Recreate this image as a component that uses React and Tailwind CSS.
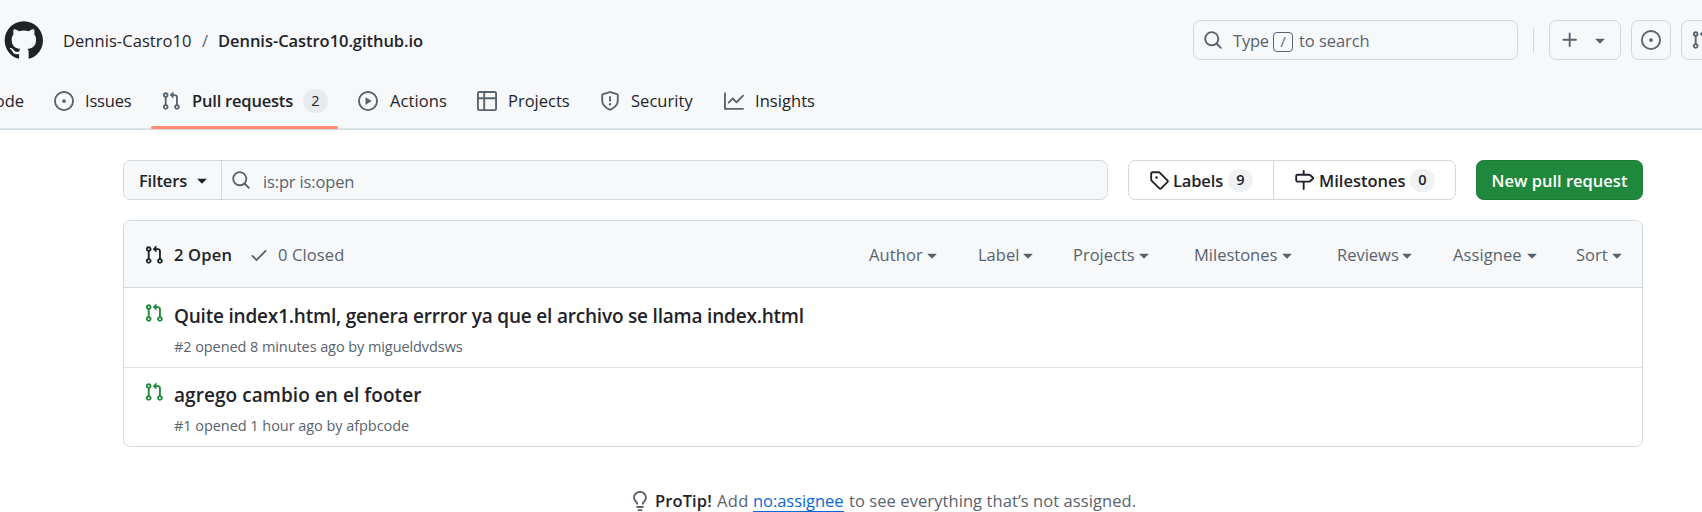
const icons = {
  pr: "M1.5 3.25a2.25 2.25 0 1 1 3 2.122v5.256a2.251 2.251 0 1 1-1.5 0V5.372A2.25 2.25 0 0 1 1.5 3.25Zm5.677-.177L9.573.677A.25.25 0 0 1 10 .854V2.5h1A2.5 2.5 0 0 1 13.5 5v5.628a2.251 2.251 0 1 1-1.5 0V5a1 1 0 0 0-1-1h-1v1.646a.25.25 0 0 1-.427.177L7.177 3.427a.25.25 0 0 1 0-.354ZM3.75 2.5a.75.75 0 1 0 0 1.5.75.75 0 0 0 0-1.5Zm0 9.5a.75.75 0 1 0 0 1.5.75.75 0 0 0 0-1.5Zm8.25.75a.75.75 0 1 0 1.5 0 .75.75 0 0 0-1.5 0Z",
  issue: "M8 9.5a1.5 1.5 0 1 0 0-3 1.5 1.5 0 0 0 0 3Z M8 0a8 8 0 1 1 0 16A8 8 0 0 1 8 0ZM1.5 8a6.5 6.5 0 1 0 13 0 6.5 6.5 0 0 0-13 0Z",
  play: "M8 0a8 8 0 1 1 0 16A8 8 0 0 1 8 0ZM1.5 8a6.5 6.5 0 1 0 13 0 6.5 6.5 0 0 0-13 0Zm4.879-2.773 4.264 2.559a.25.25 0 0 1 0 .428l-4.264 2.559A.25.25 0 0 1 6 10.559V5.442a.25.25 0 0 1 .379-.215Z",
  table: "M0 1.75C0 .784.784 0 1.75 0h12.5C15.216 0 16 .784 16 1.75v12.5A1.75 1.75 0 0 1 14.25 16H1.75A1.75 1.75 0 0 1 0 14.25ZM6.5 6.5v8h7.75a.25.25 0 0 0 .25-.25V6.5Zm8-1.5V1.75a.25.25 0 0 0-.25-.25H6.5V5Zm-13 1.5v7.75c0 .138.112.25.25.25H5v-8ZM5 5V1.5H1.75a.25.25 0 0 0-.25.25V5Z",
  shield: "M7.467.133a1.748 1.748 0 0 1 1.066 0l5.25 1.68A1.75 1.75 0 0 1 15 3.48V7c0 1.566-.32 3.182-1.303 4.682-.983 1.498-2.585 2.813-5.032 3.855a1.697 1.697 0 0 1-1.33 0c-2.447-1.042-4.049-2.357-5.032-3.855C1.32 10.182 1 8.566 1 7V3.48a1.75 1.75 0 0 1 1.217-1.667Zm.61 1.429a.25.25 0 0 0-.153 0l-5.25 1.68a.25.25 0 0 0-.174.238V7c0 1.358.275 2.666 1.057 3.86.784 1.194 2.121 2.34 4.366 3.297a.196.196 0 0 0 .154 0c2.245-.956 3.582-2.104 4.366-3.298C13.225 9.666 13.5 8.36 13.5 7V3.48a.251.251 0 0 0-.174-.237l-5.25-1.68ZM8.75 4.75v3a.75.75 0 0 1-1.5 0v-3a.75.75 0 0 1 1.5 0ZM9 10.5a1 1 0 1 1-2 0 1 1 0 0 1 2 0Z",
  graph: "M1.5 1.75V13.5h13.75a.75.75 0 0 1 0 1.5H.75a.75.75 0 0 1-.75-.75V1.75a.75.75 0 0 1 1.5 0Zm14.28 2.53-5.25 5.25a.75.75 0 0 1-1.06 0L7 7.06 4.28 9.78a.751.751 0 0 1-1.042-.018.751.751 0 0 1-.018-1.042l3.25-3.25a.75.75 0 0 1 1.06 0L10 7.94l4.72-4.72a.751.751 0 0 1 1.042.018.751.751 0 0 1 .018 1.042Z",
  search: "M10.68 11.74a6 6 0 0 1-7.922-8.982 6 6 0 0 1 8.982 7.922l3.04 3.04a.749.749 0 0 1-.326 1.275.749.749 0 0 1-.734-.215ZM11.5 7a4.499 4.499 0 1 0-8.997 0A4.499 4.499 0 0 0 11.5 7Z",
  plus: "M7.75 2a.75.75 0 0 1 .75.75V7h4.25a.75.75 0 0 1 0 1.5H8.5v4.25a.75.75 0 0 1-1.5 0V8.5H2.75a.75.75 0 0 1 0-1.5H7V2.75A.75.75 0 0 1 7.75 2Z",
  triangle: "m4.427 7.427 3.396 3.396a.25.25 0 0 0 .354 0l3.396-3.396A.25.25 0 0 0 11.396 7H4.604a.25.25 0 0 0-.177.427Z",
  tag: "M1 7.775V2.75C1 1.784 1.784 1 2.75 1h5.025c.464 0 .91.184 1.238.513l6.25 6.25a1.75 1.75 0 0 1 0 2.474l-5.026 5.026a1.75 1.75 0 0 1-2.474 0l-6.25-6.25A1.752 1.752 0 0 1 1 7.775Zm1.5 0c0 .066.026.13.073.177l6.25 6.25a.25.25 0 0 0 .354 0l5.025-5.025a.25.25 0 0 0 0-.354l-6.25-6.25a.25.25 0 0 0-.177-.073H2.75a.25.25 0 0 0-.25.25ZM6 5a1 1 0 1 1 0 2 1 1 0 0 1 0-2Z",
  milestone: "M7.75 0a.75.75 0 0 1 .75.75V3h3.634c.414 0 .814.147 1.13.414l2.07 1.75a1.75 1.75 0 0 1 0 2.672l-2.07 1.75a1.75 1.75 0 0 1-1.13.414H8.5v5.25a.75.75 0 0 1-1.5 0V10H2.75A1.75 1.75 0 0 1 1 8.25v-3.5C1 3.784 1.784 3 2.75 3H7V.75A.75.75 0 0 1 7.75 0Zm4.384 8.5a.25.25 0 0 0 .161-.06l2.07-1.75a.248.248 0 0 0 0-.38l-2.07-1.75a.25.25 0 0 0-.161-.06H2.75a.25.25 0 0 0-.25.25v3.5c0 .138.112.25.25.25h9.384Z",
  check: "M13.78 4.22a.75.75 0 0 1 0 1.06l-7.25 7.25a.75.75 0 0 1-1.06 0L2.22 9.28a.751.751 0 0 1 .018-1.042.751.751 0 0 1 1.042-.018L6 10.94l6.72-6.72a.75.75 0 0 1 1.06 0Z",
  bulb: "M8 1.5c-2.363 0-4 1.69-4 3.75 0 .984.424 1.625.984 2.304l.214.253c.223.264.47.556.673.848.284.411.537.896.621 1.49a.75.75 0 0 1-1.484.211c-.04-.282-.163-.547-.37-.847a8.456 8.456 0 0 0-.542-.68c-.084-.1-.173-.205-.268-.32C3.201 7.75 2.5 6.766 2.5 5.25 2.5 2.31 4.863 0 8 0s5.5 2.31 5.5 5.25c0 1.516-.701 2.5-1.328 3.259-.095.115-.184.22-.268.319-.207.245-.383.453-.541.681-.208.3-.33.565-.37.847a.751.751 0 0 1-1.485-.212c.084-.593.337-1.078.621-1.489.203-.292.45-.584.673-.848.075-.088.147-.173.213-.253.561-.679.985-1.32.985-2.304 0-2.06-1.637-3.75-4-3.75ZM5.75 12h4.5a.75.75 0 0 1 0 1.5h-4.5a.75.75 0 0 1 0-1.5ZM6 15.25a.75.75 0 0 1 .75-.75h2.5a.75.75 0 0 1 0 1.5h-2.5a.75.75 0 0 1-.75-.75Z",
};

const markPath =
  "M12.5.75C6.146.75 1 5.896 1 12.25c0 5.089 3.292 9.387 7.863 10.91.575.101.79-.244.79-.546 0-.273-.014-1.178-.014-2.142-2.889.532-3.636-.704-3.866-1.35-.13-.331-.69-1.352-1.18-1.625-.402-.216-.977-.748-.014-.762.906-.014 1.553.834 1.769 1.179 1.035 1.74 2.688 1.25 3.349.948.1-.747.402-1.25.733-1.538-2.559-.287-5.232-1.279-5.232-5.678 0-1.25.445-2.285 1.178-3.09-.115-.288-.517-1.467.115-3.048 0 0 .963-.302 3.163 1.179.92-.259 1.897-.388 2.875-.388.977 0 1.955.13 2.875.388 2.2-1.495 3.162-1.179 3.162-1.179.633 1.581.23 2.76.115 3.048.733.805 1.179 1.825 1.179 3.09 0 4.413-2.688 5.39-5.247 5.678.417.36.776 1.05.776 2.128 0 1.538-.014 2.774-.014 3.162 0 .302.216.662.79.547C20.709 21.637 24 17.324 24 12.25 24 5.896 18.854.75 12.5.75Z";

function Icon({ name, className = "" }) {
  return (
    <svg viewBox="0 0 16 16" fill="currentColor" aria-hidden="true" className={`size-5 shrink-0 ${className}`}>
      <path d={icons[name]} />
    </svg>
  );
}

function Text({ className = "", children }) {
  return <span className={`block shrink-0 whitespace-nowrap ${className}`}>{children}</span>;
}

function Header() {
  return (
    <div className="flex h-20 items-center pl-[3px]">
      <svg viewBox="0 0 24 24" fill="#1f2328" className="size-10 shrink-0">
        <path d={markPath} />
      </svg>
      <Text className="ml-5 w-[139px] pt-0.5 tracking-[0.06px]">Dennis-Castro10</Text>
      <Text className="w-4 pt-0.5 text-[#59636e]">/</Text>
      <Text className="pt-0.5 font-semibold tracking-[-0.05px]">Dennis-Castro10.github.io</Text>
      <div className="ml-auto flex w-[509px] shrink-0 items-center text-[#59636e]">
        <div className="flex h-10 w-[325px] shrink-0 items-center rounded-[7.5px] border border-[#d1d9e0] pl-[9px]">
          <Icon name="search" />
          <Text className="ml-[10px] w-[40px] pt-0.5 tracking-[-0.2px]">Type</Text>
          <kbd className="mt-1 flex h-5 w-5 shrink-0 items-center justify-center rounded-[4px] border border-[#59636e] font-['Open_Sans',sans-serif] text-[14px] leading-none">
            /
          </kbd>
          <Text className="ml-[6px] pt-0.5 tracking-[-0.06px]">to search</Text>
        </div>
        <div className="ml-[15px] h-[25px] w-px shrink-0 bg-[#d1d9e0]" />
        <div className="ml-[15px] flex h-10 w-[72px] shrink-0 items-center rounded-[7.5px] border border-[#d1d9e0] pl-[10px]">
          <Icon name="plus" />
          <Icon name="triangle" className="ml-[10px]" />
        </div>
        <div className="ml-[10px] flex size-10 shrink-0 items-center justify-center rounded-[7.5px] border border-[#d1d9e0]">
          <Icon name="issue" />
        </div>
        <div className="ml-[10px] flex h-10 w-[21px] shrink-0 items-center overflow-hidden rounded-l-[7.5px] border border-r-0 border-[#d1d9e0] pl-[9px]">
          <Icon name="pr" />
        </div>
      </div>
    </div>
  );
}

const tabs = [
  { icon: "issue", label: "Issues", box: "ml-[30px]", text: "ml-[11px] w-[46px] tracking-[-0.2px]" },
  { icon: "pr", label: "Pull requests", count: 2, active: true },
  { icon: "play", label: "Actions", box: "ml-5", text: "ml-3 w-[57px] tracking-[0.1px]" },
  { icon: "table", label: "Projects", box: "ml-[30px]", text: "ml-[11px] w-[62px]" },
  { icon: "shield", label: "Security", box: "ml-[30px]", text: "ml-[11px] w-[63px] tracking-[0.05px]" },
  { icon: "graph", label: "Insights", box: "ml-[30px]", text: "ml-[11px] w-[61px] tracking-[0.05px]" },
];

function Tabs() {
  return (
    <nav className="flex h-[49px] items-stretch">
      <div className="flex h-[42px] w-6 shrink-0 items-center justify-end overflow-hidden">
        <Text>Code</Text>
      </div>
      {tabs.map((t) =>
        t.active ? (
          <div
            key={t.label}
            className="ml-[20px] flex w-[187px] shrink-0 flex-col justify-between"
          >
            <div className="flex h-[42px] items-center pl-[10px]">
              <Icon name={t.icon} className="text-[#59636e]" />
              <Text className="ml-[11px] w-[111px] font-semibold tracking-[-0.2px]">{t.label}</Text>
              <Text className="flex h-6 w-[25px] items-center justify-center rounded-full bg-[#e8ebee] text-[14.5px]">
                {t.count}
              </Text>
            </div>
            <div className="h-[3px] rounded-sm bg-[#fd8c73]" />
          </div>
        ) : (
          <div key={t.label} className={`flex h-[42px] shrink-0 items-center ${t.box}`}>
            <Icon name={t.icon} className="text-[#59636e]" />
            <Text className={t.text}>{t.label}</Text>
          </div>
        )
      )}
    </nav>
  );
}

function Toolbar() {
  return (
    <div className="flex h-10 items-stretch">
      <div className="flex w-[985px] shrink-0 rounded-[7.5px] border border-[#d1d9e0] bg-[#f6f8fa]">
        <div className="flex w-[98px] shrink-0 items-center border-r border-[#d1d9e0] pl-[15px] font-semibold">
          <Text className="w-[53px] pt-px tracking-[-0.17px]">Filters</Text>
          <Icon name="triangle" />
        </div>
        <div className="flex items-center pl-[9px] text-[#59636e]">
          <Icon name="search" />
          <Text className="ml-[12px] pt-[3px] tracking-[-0.15px]">is:pr is:open</Text>
        </div>
      </div>
      <div className="ml-5 flex w-[328px] shrink-0 rounded-[7.5px] border border-[#d1d9e0] font-semibold">
        <div className="flex w-[145px] shrink-0 items-center border-r border-[#d1d9e0] pl-5">
          <Icon name="tag" />
          <Text className="ml-1 w-[55px] pt-px tracking-[-0.15px]">Labels</Text>
          <Text className="flex h-[23px] w-[25px] items-center justify-center rounded-full bg-[#eff1f3] text-[14.5px]">9</Text>
        </div>
        <div className="flex items-center pl-5">
          <Icon name="milestone" />
          <Text className="ml-[5px] w-[91px] pt-px">Milestones</Text>
          <Text className="flex h-[23px] w-[25px] items-center justify-center rounded-full bg-[#eff1f3] text-[14.5px]">0</Text>
        </div>
      </div>
      <div className="ml-5 flex w-[167px] shrink-0 items-center justify-center rounded-[7.5px] border border-[#1c7c37] bg-[#1f883d] font-semibold text-white">
        <Text className="pt-px">New pull request</Text>
      </div>
    </div>
  );
}

const filters = [
  { label: "Author", cls: "w-[109px]", text: "w-[53px] tracking-[0.12px]" },
  { label: "Label", cls: "w-[95px]", text: "w-[40px]" },
  { label: "Projects", cls: "w-[121px]", text: "w-[61px]" },
  { label: "Milestones", cls: "w-[143px]", text: "w-[83px]" },
  { label: "Reviews", cls: "w-[116px]", text: "w-[60px]" },
  { label: "Assignee", cls: "w-[123px]", text: "w-[69px] tracking-[0.1px]" },
  { label: "Sort", cls: "w-[66px]", text: "w-[31px]" },
];

const pulls = [
  {
    title: "Quite index1.html, genera errror ya que el archivo se llama index.html",
    titleCls: "tracking-[-0.2px]",
    meta: "#2 opened 8 minutes ago by migueldvdsws",
    metaCls: "tracking-[-0.08px]",
    row: "pt-[15px]",
  },
  {
    title: "agrego cambio en el footer",
    titleCls: "tracking-[0.06px]",
    meta: "#1 opened 1 hour ago by afpbcode",
    metaCls: "tracking-[-0.05px]",
    row: "border-t border-[#dde2e7] pt-[14px]",
  },
];

function PullList() {
  return (
    <div className="mt-5 overflow-hidden rounded-[7.5px] border border-[#d1d9e0]">
      <div className="flex h-[67px] items-center border-b border-[#d1d9e0] bg-[#f6f8fa] pl-5 text-[#59636e]">
        <Icon name="pr" className="mt-px text-[#1f2328]" />
        <Text className="ml-[10px] w-[75px] pt-px font-semibold tracking-[0.2px] text-[#1f2328]">2 Open</Text>
        <Icon name="check" className="mt-0.5" />
        <Text className="ml-[9px] pt-px tracking-[0.12px]">0 Closed</Text>
        <div className="ml-auto flex">
          {filters.map((f) => (
            <div key={f.label} className={`flex shrink-0 items-center pt-px ${f.cls}`}>
              <Text className={f.text}>{f.label}</Text>
              <Icon name="triangle" />
            </div>
          ))}
        </div>
      </div>
      {pulls.map((p) => (
        <div key={p.meta} className={`flex h-[79px] pl-5 ${p.row}`}>
          <Icon name="pr" className="text-[#1f883d]" />
          <div className="-mt-px ml-[10px]">
            <Text className={`text-[19px] leading-[28px] font-semibold ${p.titleCls}`}>{p.title}</Text>
            <Text className={`mt-[6px] text-[14.5px] leading-[22px] text-[#59636e] ${p.metaCls}`}>{p.meta}</Text>
          </div>
        </div>
      ))}
    </div>
  );
}

export default function App() {
  return (
    <div className="h-[512px] w-[1702px] overflow-hidden bg-white font-['Open_Sans',sans-serif] text-[16.5px] leading-[26px] text-[#1f2328]">
      <header className="h-[130px] border-b border-[#d1d9e0] bg-[#f6f8fa] shadow-[inset_0_-1px_0_#e1e6eb]">
        <Header />
        <Tabs />
      </header>
      <main className="pt-[30px] pr-[59px] pl-[123px]">
        <Toolbar />
        <PullList />
        <div className="mt-[41px] ml-[507px] flex items-center text-[#59636e]">
          <Icon name="bulb" />
          <Text className="ml-[5px] w-[62px] font-semibold tracking-[0.1px] text-[#1f2328]">ProTip!</Text>
          <Text className="w-[36px] tracking-[0.3px]">Add</Text>
          <Text className="w-[96px] self-start">
            <a className="block h-[24px] w-[91px] border-b border-[#0969da] leading-[26px] tracking-[-0.05px] text-[#0969da]">
              no:assignee
            </a>
          </Text>
          <Text className="tracking-[0.08px]">to see everything that’s not assigned.</Text>
        </div>
      </main>
    </div>
  );
}
